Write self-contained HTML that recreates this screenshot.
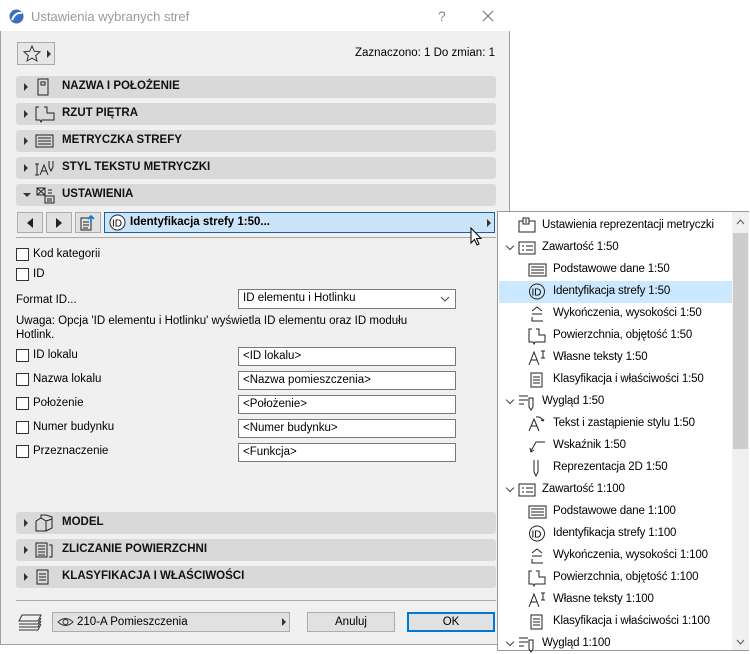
<!DOCTYPE html>
<html><head><meta charset="utf-8">
<style>
*{box-sizing:border-box;margin:0;padding:0}
body{width:750px;height:651px;background:#fff;position:relative;overflow:hidden;font-family:"Liberation Sans",sans-serif;font-size:11.5px;color:#000}
.a{position:absolute}
#dlg{left:0;top:0;width:510px;height:645px;background:#f0f0f0;border:1px solid #a0a0a0;border-top:none}
#title{left:0;top:0;width:510px;height:31px;background:#fff}
.bar{position:absolute;left:16px;width:480px;height:22px;background:#d9d9d9;border-radius:3px}
.bar b{position:absolute;left:46px;top:4px;font-size:11.5px;font-weight:bold;color:#111}
.tri{position:absolute;left:8px;top:7px;width:0;height:0;border-top:4px solid transparent;border-bottom:4px solid transparent;border-left:4px solid #333}
.bar svg{position:absolute;left:19px;top:2px}
.cb{position:absolute;left:16px;width:13px;height:13px;border:1px solid #333;background:#fff}
.lbl{position:absolute;left:33px;font-size:11.5px}
.inp{position:absolute;left:238px;width:218px;height:19px;border:1px solid #7a7a7a;background:#fff;padding:2px 4px;font-size:11.5px}
.btn{position:absolute;height:20px;background:#e1e1e1;border:1px solid #adadad;text-align:center;font-size:11.5px;line-height:18px}
#pop{left:497px;top:211px;width:252px;height:440px;background:#fff;border:1px solid #999}
.row{position:absolute;left:0;width:234px;height:22px;font-size:11.5px;letter-spacing:-0.15px;line-height:22px;white-space:nowrap}
.row svg{position:absolute;top:3px}
.chev{position:absolute;left:9px;top:7px;width:6px;height:6px;border-right:1.3px solid #444;border-bottom:1.3px solid #444;transform:rotate(45deg)}
</style></head><body>
<div id="dlg" class="a"></div>
<div id="title" class="a"></div>
<svg class="a" style="left:9px;top:9px" width="15" height="15"><circle cx="7.5" cy="7.5" r="7" fill="#3a6fc4"/><path d="M3 11 Q6 3 13 4" stroke="#fff" stroke-width="2" fill="none"/></svg>
<div class="a" style="left:31px;top:9px;font-size:13px;color:#999">Ustawienia wybranych stref</div>
<div class="a" style="left:438px;top:8px;font-size:14px;color:#888">?</div>
<svg class="a" style="left:482px;top:10px" width="12" height="12"><path d="M1 1L11 11M11 1L1 11" stroke="#777" stroke-width="1.2"/></svg>

<div class="a" style="left:17px;top:42px;width:38px;height:23px;border:1px solid #aaa;background:#e6e6e6"></div>
<svg class="a" style="left:23px;top:45px" width="18" height="17"><path d="M9 1L11.3 6.3L17 6.8L12.7 10.6L14 16L9 13.1L4 16L5.3 10.6L1 6.8L6.7 6.3Z" fill="none" stroke="#333" stroke-width="1"/></svg>
<div class="a" style="left:47px;top:50px;border-top:4px solid transparent;border-bottom:4px solid transparent;border-left:4px solid #333"></div>
<div class="a" style="right:255px;top:47px;font-size:11.5px">Zaznaczono: 1 Do zmian: 1</div>

<div class="bar" style="top:76px"><div class="tri"></div><svg width="16" height="18"><rect x="3" y="1" width="10" height="16" fill="none" stroke="#222"/><rect x="6" y="4" width="4" height="3" fill="none" stroke="#222"/></svg><b>NAZWA I POŁOŻENIE</b></div>
<div class="bar" style="top:103px"><div class="tri"></div><svg width="20" height="18"><path d="M4 2H1V15H5L6 17L7 15H19V8H12V2H9" fill="none" stroke="#222"/></svg><b>RZUT PIĘTRA</b></div>
<div class="bar" style="top:130px"><div class="tri"></div><svg width="20" height="18"><rect x="1" y="3" width="17" height="12" fill="none" stroke="#222"/><path d="M3 6H16M3 9H16M3 12H16" stroke="#222"/></svg><b>METRYCZKA STREFY</b></div>
<div class="bar" style="top:157px"><div class="tri"></div><svg width="22" height="18"><path d="M2 5V16M0 5H4M0 16H4M5 16L9 6L13 16M7 12H11M14 2V8L16 12L18 8V2" fill="none" stroke="#222"/></svg><b>STYL TEKSTU METRYCZKI</b></div>
<div class="bar" style="top:184px"><div class="a" style="left:7px;top:9px;border-left:4px solid transparent;border-right:4px solid transparent;border-top:4px solid #333"></div><svg width="20" height="18"><rect x="2" y="2" width="8" height="7" fill="none" stroke="#222"/><path d="M2 2L10 9M10 2L2 9" stroke="#222"/><rect x="10" y="10" width="9" height="7" fill="none" stroke="#222"/><path d="M12 13H17M12 15H17M13 4H17M13 7H17" stroke="#222"/></svg><b>USTAWIENIA</b></div>

<div class="btn" style="left:17px;top:212px;width:26px;height:21px"></div>
<div class="a" style="left:27px;top:218px;border-top:5px solid transparent;border-bottom:5px solid transparent;border-right:6px solid #222"></div>
<div class="btn" style="left:46px;top:212px;width:26px;height:21px"></div>
<div class="a" style="left:56px;top:218px;border-top:5px solid transparent;border-bottom:5px solid transparent;border-left:6px solid #222"></div>
<div class="btn" style="left:75px;top:212px;width:26px;height:21px"></div>
<svg class="a" style="left:80px;top:214px" width="18" height="17"><rect x="1" y="4" width="10" height="12" fill="none" stroke="#222"/><path d="M3 8H9M3 11H9M3 14H8" stroke="#222"/><path d="M11 9V3M8 5L11 2L14 5" stroke="#1a6fd0" stroke-width="1.6" fill="none"/></svg>
<div class="a" style="left:104px;top:212px;width:391px;height:21px;background:#cce4f7;border:1px solid #1a5fa6"></div>
<svg class="a" style="left:109px;top:214px" width="17" height="17"><circle cx="8.5" cy="8.5" r="7.5" fill="#fff" stroke="#222"/><text x="3" y="12.5" font-size="10" font-family="Liberation Sans">ID</text></svg>
<div class="a" style="left:130px;top:216px;font-weight:bold">Identyfikacja strefy 1:50...</div>
<div class="a" style="left:487px;top:219px;border-top:4px solid transparent;border-bottom:4px solid transparent;border-left:4px solid #333"></div>
<div class="a" style="left:16px;top:237px;width:480px;height:1px;background:#aaa"></div>

<div class="cb" style="top:248px"></div><div class="lbl" style="top:248px">Kod kategorii</div>
<div class="cb" style="top:268px"></div><div class="lbl" style="top:268px">ID</div>
<div class="a" style="left:16px;top:294px">Format ID...</div>
<div class="inp" style="top:289px;height:20px">ID elementu i Hotlinku</div>
<svg class="a" style="left:440px;top:296px" width="10" height="6"><path d="M1 1L5 5L9 1" stroke="#444" fill="none"/></svg>
<div class="a" style="left:16px;top:314px;line-height:14px">Uwaga: Opcja 'ID elementu i Hotlinku' wyświetla ID elementu oraz ID modułu<br>Hotlink.</div>
<div class="cb" style="top:349px"></div><div class="lbl" style="top:349px">ID lokalu</div><div class="inp" style="top:347px">&lt;ID lokalu&gt;</div>
<div class="cb" style="top:373px"></div><div class="lbl" style="top:373px">Nazwa lokalu</div><div class="inp" style="top:371px">&lt;Nazwa pomieszczenia&gt;</div>
<div class="cb" style="top:397px"></div><div class="lbl" style="top:397px">Położenie</div><div class="inp" style="top:395px">&lt;Położenie&gt;</div>
<div class="cb" style="top:421px"></div><div class="lbl" style="top:421px">Numer budynku</div><div class="inp" style="top:419px">&lt;Numer budynku&gt;</div>
<div class="cb" style="top:445px"></div><div class="lbl" style="top:445px">Przeznaczenie</div><div class="inp" style="top:443px">&lt;Funkcja&gt;</div>

<div class="bar" style="top:512px"><div class="tri"></div><svg width="20" height="18"><path d="M1 7L6 4L11 7V17H1ZM6 4V1L11 1L17 3V14L11 17M11 7L17 5" fill="none" stroke="#222"/></svg><b>MODEL</b></div>
<div class="bar" style="top:539px"><div class="tri"></div><svg width="20" height="18"><rect x="1" y="2" width="11" height="14" fill="none" stroke="#222"/><path d="M3 5H10M3 8H10M3 11H10M3 14H10M14 4H17V16H14" fill="none" stroke="#222"/></svg><b>ZLICZANIE POWIERZCHNI</b></div>
<div class="bar" style="top:566px"><div class="tri"></div><svg width="16" height="18"><rect x="2" y="2" width="11" height="14" fill="none" stroke="#222"/><path d="M4 6H11M4 9H11M4 12H11" stroke="#222"/></svg><b>KLASYFIKACJA I WŁAŚCIWOŚCI</b></div>
<div class="a" style="left:16px;top:600px;width:480px;height:1px;background:#aaa"></div>

<svg class="a" style="left:18px;top:613px" width="25" height="18"><path d="M4 2H23L20 8H1ZM1 11H20L23 5M1 14H20L23 8M1 17H20L23 11" fill="none" stroke="#333"/></svg>
<div class="btn" style="left:52px;top:612px;width:238px;text-align:left;padding-left:24px">210-A Pomieszczenia</div>
<svg class="a" style="left:57px;top:617px" width="17" height="10"><path d="M1 5Q8.5 -2 16 5Q8.5 12 1 5Z" fill="none" stroke="#333"/><circle cx="8.5" cy="5" r="2.5" fill="none" stroke="#333"/></svg>
<div class="a" style="left:282px;top:618px;border-top:4px solid transparent;border-bottom:4px solid transparent;border-left:4px solid #333"></div>
<div class="btn" style="left:307px;top:612px;width:88px">Anuluj</div>
<div class="btn" style="left:407px;top:612px;width:88px;border:2px solid #0078d7;line-height:16px">OK</div>

<div id="pop" class="a">
<div class="a" style="left:234px;top:0;width:17px;height:438px;background:#f0f0f0"></div>
<div class="a" style="left:235px;top:21px;width:15px;height:216px;background:#cdcdcd"></div>
<svg class="a" style="left:238px;top:7px" width="9" height="6"><path d="M1 5L4.5 1L8 5" stroke="#555" fill="none"/></svg>
<svg class="a" style="left:238px;top:427px" width="9" height="6"><path d="M1 1L4.5 5L8 1" stroke="#555" fill="none"/></svg>
<div class="a" style="left:1px;top:69px;width:233px;height:22px;background:#cce8ff"></div>
<div id="rows"></div>
</div>
<svg class="a" style="left:470px;top:227px" width="14" height="20"><path d="M1 1V16L4.5 12.5L7 18L9 17L6.5 11.5H11Z" fill="#fff" stroke="#000"/></svg>

<script>
var I={
cfg:'<rect x="1" y="4" width="16" height="11" fill="none" stroke="#222"/><rect x="5" y="1" width="6" height="6" fill="#fff" stroke="#222"/><path d="M7 3H9M7 5H9" stroke="#222"/>',
list:'<rect x="1" y="3" width="16" height="12" fill="none" stroke="#222"/><path d="M4 7H6M8 7H15M4 11H6M8 11H15" stroke="#222"/>',
tab:'<rect x="1" y="3" width="17" height="12" fill="none" stroke="#222"/><path d="M3 6H16M3 9H16M3 12H16" stroke="#222"/>',
id:'<circle cx="9" cy="8.5" r="7.5" fill="none" stroke="#222"/><text x="3.5" y="12.5" font-size="10" font-family="Liberation Sans">ID</text>',
fin:'<path d="M4 6L9 2L14 6M4 9H14M4 12V16H15" fill="none" stroke="#222"/>',
area:'<path d="M4 2H1V15H5L6 17L7 15H17V8H11V2H8" fill="none" stroke="#222"/>',
txt:'<path d="M1 16L6 3L11 16M3 11H9M13 2H17M15 2V9M13 9H17" fill="none" stroke="#222"/>',
cls:'<rect x="3" y="2" width="11" height="14" fill="none" stroke="#222"/><path d="M5 6H12M5 9H12M5 12H12" stroke="#222"/>',
look:'<path d="M1 3H10M1 7H10M1 11H6M11 5V14L13 17L15 14V5Z" fill="none" stroke="#222"/>',
tstyle:'<path d="M1 16L6 4L11 16M3 11H9M8 2Q13 1 15 6M13 5L15 6L16 4" fill="none" stroke="#222"/>',
ptr:'<path d="M17 5H8L3 14M2 11L3 15L6 13" fill="none" stroke="#222"/>',
pen:'<path d="M6 1V13L8 17L10 13V1" fill="none" stroke="#222"/>'
};
var R=[[0,'cfg','Ustawienia reprezentacji metryczki',0],[0,'list','Zawartość 1:50',1],[1,'tab','Podstawowe dane 1:50'],[1,'id','Identyfikacja strefy 1:50'],[1,'fin','Wykończenia, wysokości 1:50'],[1,'area','Powierzchnia, objętość 1:50'],[1,'txt','Własne teksty 1:50'],[1,'cls','Klasyfikacja i właściwości 1:50'],[0,'look','Wygląd 1:50',1],[1,'tstyle','Tekst i zastąpienie stylu 1:50'],[1,'ptr','Wskaźnik 1:50'],[1,'pen','Reprezentacja 2D 1:50'],[0,'list','Zawartość 1:100',1],[1,'tab','Podstawowe dane 1:100'],[1,'id','Identyfikacja strefy 1:100'],[1,'fin','Wykończenia, wysokości 1:100'],[1,'area','Powierzchnia, objętość 1:100'],[1,'txt','Własne teksty 1:100'],[1,'cls','Klasyfikacja i właściwości 1:100'],[0,'look','Wygląd 1:100',1]];
var h='';
R.forEach(function(r,i){var t=2+i*22;var ix=r[0]?30:20,tx=r[0]?55:44;
h+='<div class="row" style="top:'+t+'px">'+(r[3]?'<div class="chev"></div>':'')+'<svg style="left:'+ix+'px" width="19" height="18">'+I[r[1]]+'</svg><span style="position:absolute;left:'+tx+'px">'+r[2]+'</span></div>';});
document.getElementById('rows').innerHTML=h;
</script>
</body></html>
